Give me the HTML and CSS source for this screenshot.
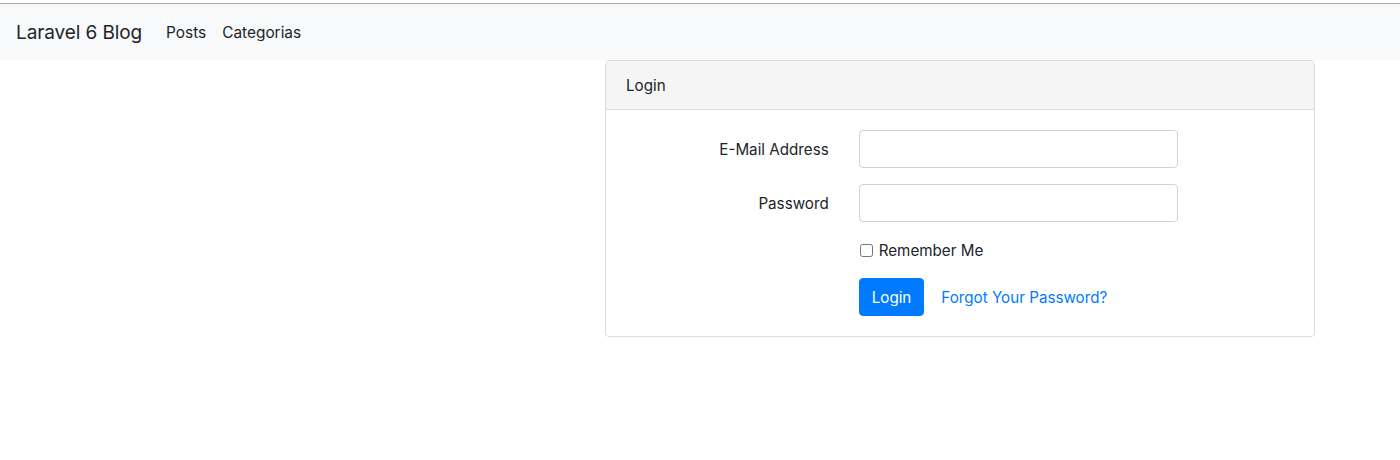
FILE: index.html
```html
<!DOCTYPE html>
<html lang="en">
<head>
<meta charset="utf-8">
<title>Laravel 6 Blog</title>
<link rel="stylesheet" href="styles.css">
</head>
<body>
<div class="topline"></div>
<nav class="navbar">
  <a class="brand" href="#">Laravel 6 Blog</a>
  <ul class="nav-links">
    <li><a href="#">Posts</a></li>
    <li><a href="#">Categorias</a></li>
  </ul>
</nav>
<main class="main">
  <div class="card">
    <div class="card-header">Login</div>
    <form class="card-body">
      <div class="form-row">
        <label class="form-label" for="email">E-Mail Address</label>
        <div class="form-field"><input class="form-control" id="email" type="email"></div>
      </div>
      <div class="form-row">
        <label class="form-label" for="password">Password</label>
        <div class="form-field"><input class="form-control" id="password" type="password"></div>
      </div>
      <div class="form-row">
        <div class="form-label"></div>
        <div class="form-field">
          <label class="check"><input type="checkbox" class="check-input"><span class="check-text">Remember Me</span></label>
        </div>
      </div>
      <div class="form-row last">
        <div class="form-label"></div>
        <div class="form-field actions">
          <button type="button" class="btn btn-primary">Login</button>
          <a href="#" class="btn-link">Forgot Your Password?</a>
        </div>
      </div>
    </form>
  </div>
</main>
</body>
</html>
```

FILE: styles.css
```css
* { box-sizing: border-box; }
html, body { margin: 0; padding: 0; background: #fff; }
body {
  font-family: Inter, "Liberation Sans", sans-serif;
  font-size: 15.2px;
  line-height: 24px;
  color: #212529;
}
.topline {
  height: 4px;
  border-bottom: 1px solid #a9a9a9;
  background: #fff;
}
.navbar {
  height: 56px;
  background: #f8f9fa;
  display: flex;
  align-items: center;
  padding: 1px 16px 0;
}
.brand {
  font-size: 19px;
  color: #212529;
  text-decoration: none;
  margin-right: 16px;
  letter-spacing: -0.1px;
}
.nav-links {
  display: flex;
  list-style: none;
  margin: 0;
  padding: 0;
}
.nav-links a {
  display: block;
  padding: 8px;
  color: #212529;
  text-decoration: none;
  font-size: 15.4px;
}
.main {
  padding-left: 605px;
}
.card {
  width: 710px;
  border: 1px solid #dfdfdf;
  border-radius: 4px;
  background: #fff;
}
.card-header {
  background: #f5f5f5;
  border-bottom: 1px solid #dcdcdc;
  padding: 13px 20px 11px;
  border-radius: 3px 3px 0 0;
  line-height: 24px;
}
.card-body {
  padding: 20px;
  display: flex;
  flex-direction: column;
  gap: 16px;
}
.form-row {
  display: grid;
  grid-template-columns: 202.7px 319px;
  column-gap: 30px;
  margin-left: -15px;
  padding-left: 15px;
}
.form-label {
  text-align: right;
  padding-top: 8px;
  line-height: 24px;
}
.form-control {
  display: block;
  width: 100%;
  height: 38px;
  border: 1px solid #ced4da;
  border-radius: 4px;
  padding: 6px 12px;
  font: inherit;
  background: #fff;
}
.check {
  display: flex;
  align-items: center;
  gap: 6px;
  line-height: 24px;
}
.check-text {
  position: relative;
  top: 1px;
}
.check-input {
  margin: 0 0 0 1px;
  width: 13px;
  height: 13px;
}
.actions {
  display: flex;
  align-items: center;
  gap: 17px;
}
.btn {
  font: inherit;
  border: 1px solid transparent;
  border-radius: 4px;
  padding: 7px 12px 5px;
  line-height: 24px;
  cursor: pointer;
}
.btn-primary {
  background: #007bff;
  border-color: #007bff;
  color: #fff;
}
.btn-link {
  color: #007bff;
  text-decoration: none;
  position: relative;
  top: 1px;
}
```
